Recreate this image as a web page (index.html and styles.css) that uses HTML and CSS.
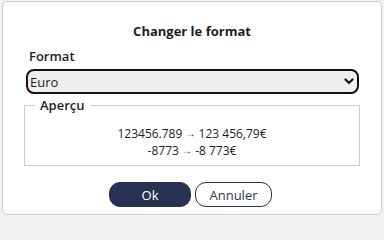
FILE: index.html
```html
<!DOCTYPE html>
<html lang="fr">
<head>
<meta charset="utf-8">
<title>Changer le format</title>
<link rel="stylesheet" href="styles.css">
</head>
<body>
<div class="dialog">
  <h1 class="title">Changer le format</h1>
  <label class="label" for="fmt">Format</label>
  <div class="select-wrap">
    <select id="fmt" class="select">
      <option>Euro</option>
    </select>
    <svg class="chevron" width="10" height="7" viewBox="0 0 10 7"><path d="M1.5 1.5 L5 5 L8.5 1.5" fill="none" stroke="#111" stroke-width="2.2" stroke-linecap="round" stroke-linejoin="round"/></svg>
  </div>
  <fieldset class="preview">
    <legend class="legend">Aperçu</legend>
    <div class="line">123456.789 <span class="arrow">→</span> 123 456,79€</div>
    <div class="line">-8773 <span class="arrow">→</span> -8 773€</div>
  </fieldset>
  <div class="actions">
    <button class="btn btn-primary">Ok</button>
    <button class="btn btn-secondary">Annuler</button>
  </div>
</div>
</body>
</html>
```

FILE: styles.css
```css
* { box-sizing: border-box; }
html, body { margin: 0; padding: 0; }
body {
  width: 384px;
  height: 217px;
  background: #f1f1f1;
  font-family: "Open Sans", "Noto Sans", sans-serif;
  color: #1e1e1e;
  overflow: hidden;
  padding: 1px 2px 0 2px;
}
.dialog {
  width: 380px;
  height: 214px;
  background: #fff;
  border: 1px solid #cfcfcf;
  border-radius: 5px;
  padding: 20px 22px 0 22px;
  display: flex;
  flex-direction: column;
}
.title {
  margin: 0;
  font-size: 13px;
  line-height: 18px;
  font-weight: 700;
  text-align: center;
}
.label {
  margin-top: 7px;
  font-size: 13px;
  line-height: 18px;
  font-weight: 600;
  padding-left: 4px;
}
.select-wrap {
  position: relative;
  margin: 4px 0 0 1px;
}
.select {
  appearance: none;
  -webkit-appearance: none;
  display: block;
  width: 333px;
  height: 25px;
  border: 2px solid #121212;
  border-radius: 8px;
  background: #efefef;
  font-family: "Open Sans", "Noto Sans", sans-serif;
  font-size: 13px;
  color: #1e1e1e;
  padding: 0 0 0 2px;
  margin: 0;
}
.chevron {
  position: absolute;
  right: 5px;
  top: 9px;
}
.preview {
  margin: 2px -1px 0 -1px;
  border: 1px solid #cfcfcf;
  padding: 11px 10px 6px 10px;
  text-align: center;
  min-width: 0;
}
.legend {
  font-size: 13px;
  font-weight: 600;
  line-height: 18px;
  padding: 0 5px;
  text-align: left;
}
.line {
  font-size: 12px;
  line-height: 17px;
}
.arrow {
  font-size: 10px;
  vertical-align: 1px;
}
.actions {
  margin-top: 16px;
  display: flex;
  justify-content: center;
  gap: 4px;
  padding-right: 3px;
}
.btn {
  height: 25px;
  border-radius: 11px;
  font-family: "Open Sans", "Noto Sans", sans-serif;
  font-size: 13px;
  padding: 0;
}
.btn-primary {
  width: 82px;
  background: #283154;
  border: 1px solid #283154;
  color: #fff;
}
.btn-secondary {
  width: 77px;
  background: #fff;
  border: 1px solid #283154;
  color: #2c3550;
}
```
